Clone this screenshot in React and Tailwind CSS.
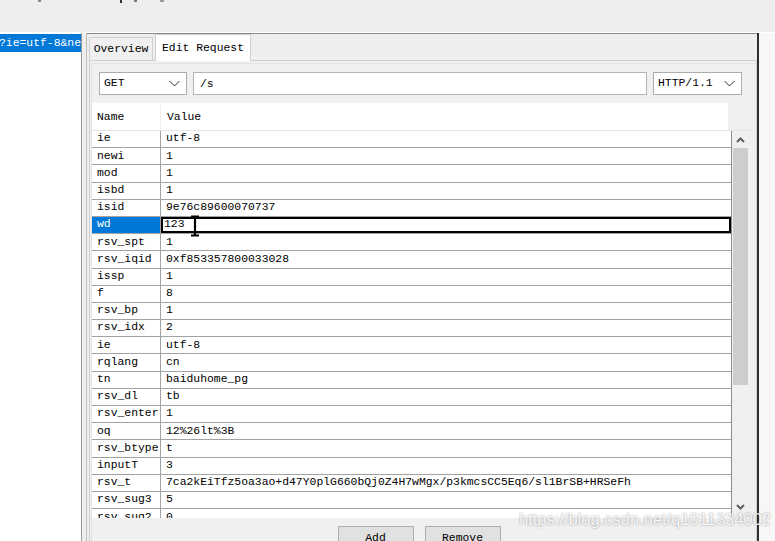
import React from 'react';

const rows = [
  ['ie', 'utf-8'],
  ['newi', '1'],
  ['mod', '1'],
  ['isbd', '1'],
  ['isid', '9e76c89600070737'],
  ['wd', '123'],
  ['rsv_spt', '1'],
  ['rsv_iqid', '0xf853357800033028'],
  ['issp', '1'],
  ['f', '8'],
  ['rsv_bp', '1'],
  ['rsv_idx', '2'],
  ['ie', 'utf-8'],
  ['rqlang', 'cn'],
  ['tn', 'baiduhome_pg'],
  ['rsv_dl', 'tb'],
  ['rsv_enter', '1'],
  ['oq', '12%26lt%3B'],
  ['rsv_btype', 't'],
  ['inputT', '3'],
  ['rsv_t', '7ca2kEiTfz5oa3ao+d47Y0plG660bQj0Z4H7wMgx/p3kmcsCC5Eq6/sl1BrSB+HRSeFh'],
  ['rsv_sug3', '5'],
  ['rsv_sug2', '0'],
];

const Chevron = () => (
  <svg width="11" height="7" viewBox="0 0 11 7" className="shrink-0">
    <polyline points="0.5,1 5.5,6 10.5,1" fill="none" stroke="#333" strokeWidth="1" />
  </svg>
);

const Select = ({ label, className }) => (
  <div className={`flex h-[23px] items-center justify-between border border-[#adadad] bg-white pl-[4px] pr-[6px] ${className}`}>
    <span className="pt-[1px]">{label}</span>
    <Chevron />
  </div>
);

// text cursor hovering the edited cell
const IBeam = () => (
  <svg width="10" height="22" viewBox="0 0 10 22" className="absolute left-[27px] top-[-4px] z-10 overflow-visible">
    <path d="M1 1.5h8M1 20.5h8M5 1.5v19" stroke="#000" strokeWidth="2.2" fill="none" />
  </svg>
);

export default function App() {
  return (
    <div className="relative h-[541px] w-[775px] overflow-hidden bg-[#eeeeee] font-['Liberation_Mono',monospace] text-[11.4px] leading-none text-black">
      {/* top toolbar remnants */}
      <div className="relative h-[33px] border-b border-[#ffffff]">
        <div className="absolute left-[38px] top-0 h-[2px] w-[3px] bg-[#888]" />
        <div className="absolute left-[120px] top-0 h-[3px] w-[2px] bg-[#333]" />
        <div className="absolute left-[134px] top-0 h-[2px] w-[3px] bg-[#777]" />
        <div className="absolute left-[160px] top-0 h-[2px] w-[4px] bg-[#999]" />
      </div>

      <div className="flex h-[508px]">
        {/* left session list */}
        <div className="w-[82px] shrink-0 border-r border-[#9a9a9a] bg-white pt-[1px]">
          <div className="flex h-[18px] items-center overflow-hidden whitespace-nowrap bg-[#0078d7] text-white">
            <span className="-ml-[1px] pt-[1px]">?ie=utf-8&amp;new</span>
          </div>
        </div>
        <div className="w-[5px] shrink-0 border-r border-[#bdbdbd]" />

        {/* inspector */}
        <div className="flex w-[670px] shrink-0 flex-col border-t border-[#8a8a8a] pl-[2px]">
          {/* tabs */}
          <div className="flex h-[26px] items-end">
            <div className="flex h-[23px] w-[64px] items-center justify-center border border-b-0 border-[#d0d0d0] bg-[#f0f0f0] pt-[2px]">
              Overview
            </div>
            <div className="relative z-10 -mb-[1px] ml-[2px] flex h-[27px] w-[96px] items-center justify-center border border-b-0 border-[#d0d0d0] bg-white pt-[1px]">
              Edit Request
            </div>
          </div>

          {/* tab page */}
          <div className="flex flex-1 flex-col border border-[#d0d0d0] bg-[#f0f0f0] pl-[1px] pt-[2px]">
            <div className="flex flex-1 flex-col border-l border-t border-[#e3e3e3] pr-[2px]">
              {/* request line */}
              <div className="flex items-center gap-[6px] pl-[7px] pt-[8px]">
                <Select label="GET" className="w-[88px]" />
                <div className="flex h-[23px] w-[454px] items-center border border-[#b5b5b5] bg-white pl-[6px] pt-[2px]">/s</div>
                <Select label="HTTP/1.1" className="w-[89px] pl-[3px]" />
              </div>

              {/* grid */}
              <div className="mt-[8px] flex h-[27px] w-[636px] items-center bg-white">
                <div className="flex h-full w-[69px] items-center border-r border-[#efefef] pl-[5px] pt-[3px]">Name</div>
                <div className="pl-[6px] pt-[3px]">Value</div>
              </div>
              <div className="flex h-[388px] border-t border-[#e5e5e5]">
                <div className="w-[640px] overflow-hidden border-r border-[#8c8c8c] bg-white">
                  {rows.map(([name, value], i) => {
                    const editing = name === 'wd';
                    return (
                      <div key={i} className={`flex h-[17.2px] border-b border-[#a3a3a3] ${editing ? 'relative z-10' : ''}`}>
                        <div
                          className={`flex w-[69px] shrink-0 items-center border-r border-[#a3a3a3] pl-[5px] ${editing ? 'bg-[#0078d7] text-white' : ''}`}
                        >
                          {name}
                        </div>
                        {editing ? (
                          <div className="relative flex flex-1 items-center border-2 border-[#000] pl-[1px]">
                            <span>{value}</span>
                            <IBeam />
                          </div>
                        ) : (
                          <div className="flex flex-1 items-center whitespace-nowrap pl-[5px]">{value}</div>
                        )}
                      </div>
                    );
                  })}
                </div>
                {/* scrollbar */}
                <div className="flex w-[17px] flex-col items-center bg-[#f0f0f0]">
                  <div className="flex h-[17px] items-center justify-center">
                    <svg width="9" height="6" viewBox="0 0 9 6">
                      <polyline points="1,5 4.5,1.5 8,5" fill="none" stroke="#606060" strokeWidth="2" />
                    </svg>
                  </div>
                  <div className="h-[237px] w-[15px] bg-[#cdcdcd]" />
                  <div className="flex-1" />
                  <div className="flex h-[17px] items-start justify-center pt-[3px]">
                    <svg width="9" height="6" viewBox="0 0 9 6">
                      <polyline points="1,1 4.5,4.5 8,1" fill="none" stroke="#606060" strokeWidth="2" />
                    </svg>
                  </div>
                </div>
              </div>

              {/* buttons */}
              <div className="flex justify-center gap-[11px] pr-[8px] pt-[8px]">
                <div className="flex h-[22px] w-[76px] items-center justify-center border border-[#adadad] bg-[#e1e1e1] pt-[3px]">
                  Add
                </div>
                <div className="flex h-[22px] w-[76px] items-center justify-center border border-[#adadad] bg-[#e1e1e1] pt-[3px]">
                  Remove
                </div>
              </div>
            </div>
          </div>
        </div>

        {/* window edge */}
        <div className="w-[2px] shrink-0 bg-[#2e2e2e]" />
        <div className="flex-1 bg-[#f7f7f7]" />
      </div>

      {/* watermark */}
      <div className="pointer-events-none absolute left-[519px] top-[511px] font-['Liberation_Sans',sans-serif] text-[16.5px] text-white/90 [text-shadow:0_0_2px_rgba(0,0,0,0.45)]">
        https://blog.csdn.net/q1011334002
      </div>
    </div>
  );
}
